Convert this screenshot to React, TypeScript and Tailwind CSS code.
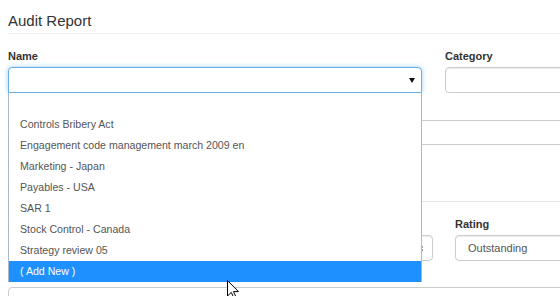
const options = [
  "",
  "Controls Bribery Act",
  "Engagement code management march 2009 en",
  "Marketing - Japan",
  "Payables - USA",
  "SAR 1",
  "Stock Control - Canada",
  "Strategy review 05",
];

const inputCls =
  "h-[26px] rounded-[4px] border border-[#ccc] bg-white shadow-[inset_0_1px_1px_rgba(0,0,0,0.075)]";

const App = () => {
  return (
    <div
      className="relative w-[560px] h-[296px] overflow-hidden bg-white pl-2 text-[#333]"
      style={{ fontFamily: '"Liberation Sans", Arial, sans-serif' }}
    >
      <h1 className="pt-[11px] pb-[2px] text-[15px] leading-5 font-normal border-b border-[#eee]">
        Audit Report
      </h1>

      {/* first row: name + category */}
      <div className="mt-[14px] grid grid-cols-[414px_140px] gap-x-[23px]">
        <div>
          <label className="block text-[11px] font-bold leading-4 mb-[3px]">Name</label>
          <div className="relative h-[26px] rounded-t-[4px] border border-[#66afe9] bg-white shadow-[0_0_5px_rgba(102,175,233,0.6)]">
            <svg className="absolute right-[6px] top-[10px] w-[6px] h-[5px]" viewBox="0 0 6 5">
              <path d="M0 0h6L3 5z" fill="#111" />
            </svg>
          </div>
        </div>
        <div>
          <label className="block text-[11px] font-bold leading-4 mb-[3px]">Category</label>
          <div className={inputCls} />
        </div>
      </div>

      {/* description (label sits under the open list) */}
      <div className="mt-[8px]">
        <div className="h-4 mb-[3px]" />
        <div className="h-[25px] w-[600px] rounded-[4px] border border-[#ccc]" />
      </div>

      <div className="mt-[56px] w-[600px] border-t border-[#e5e5e5]" />

      {/* rating row */}
      <div className="mt-[14px] grid grid-cols-[425px_140px] gap-x-[22px]">
        <div>
          <div className="h-4 mb-[3px]" />
          <div className={`relative ${inputCls}`}>
            <svg className="absolute right-[9px] top-[8px] w-[4px] h-[9px]" viewBox="0 0 4 9">
              <path d="M0 3.5L2 0l2 3.5zM0 5.5h4L2 9z" fill="#223" />
            </svg>
          </div>
        </div>
        <div>
          <label className="block text-[11px] font-bold leading-4 mb-[3px]">Rating</label>
          <div className={`${inputCls} flex items-center pl-[12px] text-[11px] text-[#555]`}>
            Outstanding
          </div>
        </div>
      </div>

      <div className="mt-[6px]">
        <div className="h-4 mb-[4px]" />
        <div className="h-[40px] w-[600px] rounded-[4px] border border-[#ccc]" />
      </div>

      {/* open dropdown list */}
      <ul className="absolute left-2 top-[93px] w-[414px] border-x border-[#a9b8cc] bg-white text-[10.6px] text-[#555]">
        {options.map((o, i) => (
          <li key={i} className="h-[21px] leading-[21px] pl-[11px]">
            {o}
          </li>
        ))}
        <li className="h-[21px] leading-[21px] pl-[11px] bg-[#1e90ff] text-white">( Add New )</li>
      </ul>

      {/* mouse pointer */}
      <svg className="absolute left-[227px] top-[280px] w-[12px] h-[19px]" viewBox="0 0 12 19">
        <path d="M0.5 0.5V16l3.8-3.6 2.6 5.8 2.2-1-2.6-5.6H11.5z" fill="#fff" stroke="#000" strokeWidth="1" />
      </svg>
    </div>
  );
};

export default App;
